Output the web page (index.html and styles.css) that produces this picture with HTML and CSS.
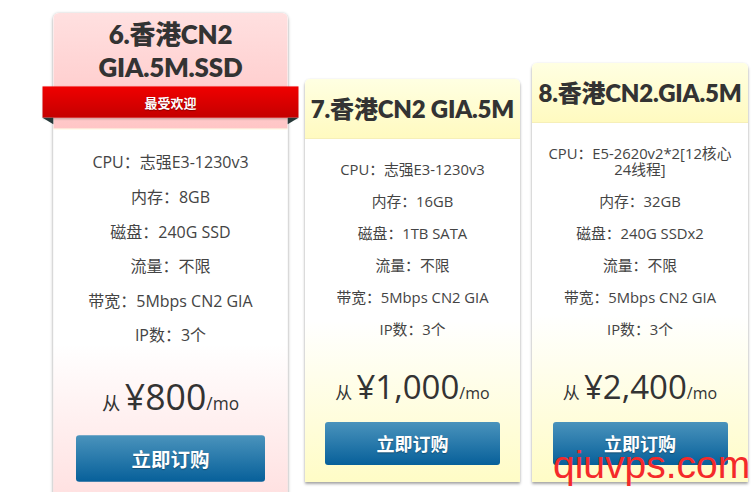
FILE: index.html
```html
<!DOCTYPE html>
<html lang="zh">
<head>
<meta charset="utf-8">
<title>香港CN2 GIA 套餐</title>
<link rel="stylesheet" href="styles.css">
</head>
<body>
<div class="plans">
  <div class="plan pink featured">
    <div class="plan-head">
      <h3 class="plan-title">6.香港CN2 GIA.5M.SSD</h3>
      <div class="ribbon">最受欢迎</div>
    </div>
    <ul class="specs">
      <li>CPU：志强E3-1230v3</li>
      <li>内存：8GB</li>
      <li>磁盘：240G SSD</li>
      <li>流量：不限</li>
      <li>带宽：5Mbps CN2 GIA</li>
      <li>IP数：3个</li>
    </ul>
    <div class="price"><span class="from">从</span> <span class="amt">¥800</span><span class="per">/mo</span></div>
    <a class="buy" href="#">立即订购</a>
  </div>

  <div class="plan yellow p2">
    <div class="plan-head">
      <h3 class="plan-title">7.香港CN2 GIA.5M</h3>
    </div>
    <ul class="specs">
      <li>CPU：志强E3-1230v3</li>
      <li>内存：16GB</li>
      <li>磁盘：1TB SATA</li>
      <li>流量：不限</li>
      <li>带宽：5Mbps CN2 GIA</li>
      <li>IP数：3个</li>
    </ul>
    <div class="price"><span class="from">从</span> <span class="amt">¥1,000</span><span class="per">/mo</span></div>
    <a class="buy" href="#">立即订购</a>
  </div>

  <div class="plan yellow p3">
    <div class="plan-head">
      <h3 class="plan-title">8.香港CN2.GIA.5M</h3>
    </div>
    <ul class="specs">
      <li>CPU：E5-2620v2*2[12核心24线程]</li>
      <li>内存：32GB</li>
      <li>磁盘：240G SSDx2</li>
      <li>流量：不限</li>
      <li>带宽：5Mbps CN2 GIA</li>
      <li>IP数：3个</li>
    </ul>
    <div class="price"><span class="from">从</span> <span class="amt">¥2,400</span><span class="per">/mo</span></div>
    <a class="buy" href="#">立即订购</a>
  </div>
</div>
<div class="watermark">qiuvps.com</div>
</body>
</html>
```

FILE: styles.css
```css
* { box-sizing: border-box; }
html, body { margin: 0; padding: 0; background: #fff; }
body {
  width: 756px;
  height: 492px;
  overflow: hidden;
  position: relative;
  font-family: "Open Sans", "Noto Sans CJK SC", sans-serif;
  color: #444;
}

.plans {
  display: flex;
  align-items: flex-end;
  height: 482px;
  padding-left: 62px;
}

.plan {
  display: flex;
  flex-direction: column;
  align-items: center;
  border-radius: 5px 5px 0 0;
  box-shadow: 0 2px 3px rgba(0, 0, 0, 0.35), 0 0 2px rgba(0, 0, 0, 0.08);
  padding-bottom: 17px;
}
.plan.yellow { background: linear-gradient(to bottom, #fff 0%, #fff 60%, #fffcc6 100%); }
.plan.pink { background: linear-gradient(to bottom, #fff 0%, #fff 68%, #ffe0e0 100%); }

.featured {
  width: 217px;
  margin-right: 26px;
  transform: scale(1.08);
  position: relative;
  z-index: 1;
}
.p2 { width: 215px; margin-right: 12px; }
.p3 { width: 216px; }

.plan-head {
  align-self: stretch;
  height: 60px;
  border-radius: 5px 5px 0 0;
  border-bottom: 1px solid #f6efb8;
  display: flex;
  flex-direction: column;
  align-items: center;
  justify-content: center;
}
.yellow .plan-head { background: linear-gradient(to bottom, #ffffe2, #fffac0); }
.pink .plan-head {
  height: 108px;
  justify-content: flex-start;
  padding-top: 5px;
  background: linear-gradient(to bottom, #ffe0e0, #ffc6c6);
  border-bottom-color: #fbf1c2;
}

.plan-title {
  margin: 0;
  font-family: "Lato", "Noto Sans CJK SC", sans-serif;
  font-weight: 800;
  font-size: 24px;
  line-height: 30px;
  color: #333;
  text-align: center;
  letter-spacing: -0.2px;
}
.pink .plan-title { width: 160px; }

.ribbon {
  position: relative;
  align-self: stretch;
  margin: 3px -10px 0;
  height: 29px;
  line-height: 29px;
  text-align: center;
  color: #fff;
  font-family: "Noto Sans CJK SC", sans-serif;
  font-weight: 700;
  font-size: 12px;
  text-shadow: 0 1px 1px rgba(0, 0, 0, 0.35);
  background: linear-gradient(to bottom, #f00000, #c40000);
  box-shadow: 0 1px 2px rgba(0, 0, 0, 0.3);
}
.ribbon::before, .ribbon::after {
  content: "";
  position: absolute;
  top: 29px;
  width: 0;
  height: 0;
  border-top: 6px solid #263838;
}
.ribbon::before { left: 0; border-left: 10px solid transparent; }
.ribbon::after { right: 0; border-right: 10px solid transparent; }

.specs {
  list-style: none;
  margin: 0;
  padding: 14px 10px 0;
  align-self: stretch;
  text-align: center;
  font-size: 14.8px;
  line-height: 16px;
}
.specs li { padding: 8px 0; }

.price {
  margin-top: 20px;
  height: 44px;
  line-height: 44px;
  color: #333;
  white-space: nowrap;
}
.price .from { font-size: 17px; font-family: "Noto Sans CJK SC", sans-serif; }
.price .amt { font-size: 33px; }
.price .per { font-size: 16px; }

.buy {
  margin-top: 13px;
  width: 175px;
  height: 43px;
  line-height: 43px;
  text-align: center;
  border-radius: 3px;
  background: linear-gradient(to bottom, #4a93bc, #07609a);
  color: #fff;
  text-decoration: none;
  font-family: "Noto Sans CJK SC", sans-serif;
  font-weight: 700;
  font-size: 18px;
  text-shadow: 0 1px 1px rgba(0, 0, 0, 0.3);
}

.watermark {
  position: absolute;
  left: 553px;
  top: 442px;
  font-family: "Liberation Sans", Arial, sans-serif;
  font-size: 39px;
  line-height: 45px;
  color: #f42a2a;
  z-index: 2;
}
```
